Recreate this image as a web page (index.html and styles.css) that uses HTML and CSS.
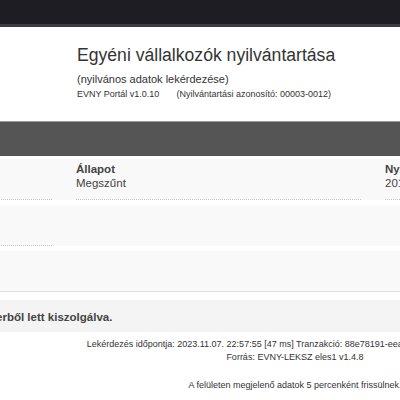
FILE: index.html
```html
<!DOCTYPE html>
<html lang="hu">
<head>
<meta charset="utf-8">
<link rel="stylesheet" href="styles.css">
</head>
<body>
<div class="topbar"></div>
<div class="page">
  <header class="header">
    <h1 class="title">Egyéni vállalkozók nyilvántartása</h1>
    <div class="subtitle">(nyilvános adatok lekérdezése)</div>
    <div class="meta"><span class="version">EVNY Portál v1.0.10</span><span>(Nyilvántartási azonosító: 00003-0012)</span></div>
  </header>
  <div class="band"></div>
  <section class="data">
    <div class="row">
      <div class="cell"><div class="label">Név</div><div class="value">Kiss</div></div>
      <div class="cell"><div class="label">Állapot</div><div class="value">Megszűnt</div></div>
      <div class="cell"><div class="label">Nyilvántartásba vétel</div><div class="value">2012.05.14.</div></div>
    </div>
    <div class="row">
      <div class="cell"><div class="label">&nbsp;</div><div class="value">&nbsp;</div></div>
      <div class="cell plain"></div>
      <div class="cell plain"></div>
    </div>
    <div class="row last">
      <div class="cell wide"><div class="label">&nbsp;</div><div class="value">&nbsp;</div></div>
    </div>
  </section>
  <div class="notice"><span class="notice-text">A válasz a gyorsítótár szerverből lett kiszolgálva.</span></div>
  <footer class="footer">
    <div>Lekérdezés időpontja: 2023.11.07. 22:57:55 [47 ms] Tranzakció: 88e78191-eeaa-4c1d-9b2e-5f3a7d6c0e</div>
    <div>Forrás: EVNY-LEKSZ eles1 v1.4.8</div>
    <div class="refresh">A felületen megjelenő adatok 5 percenként frissülnek.</div>
  </footer>
</div>
</body>
</html>
```
FILE: styles.css
```css
html, body {
  margin: 0;
  padding: 0;
  background: #fff;
  overflow: hidden;
}
body {
  font-family: "Liberation Sans", Arial, sans-serif;
  color: #333;
  width: 400px;
  height: 400px;
}
.topbar {
  height: 24px;
  background: #1d1d23;
  border-bottom: 3px solid #3b3b40;
}
.page {
  width: 810px;
  margin-left: -110px;
}
.header {
  height: 95px;
  padding-left: 187px;
  padding-top: 17px;
  box-sizing: border-box;
  border-bottom: 1px solid #9a9a9a;
}
.title {
  margin: 0;
  font-size: 17.6px;
  font-weight: normal;
  line-height: 22px;
  color: #333;
}
.subtitle {
  font-size: 11px;
  line-height: 14px;
  margin-top: 6px;
  color: #333;
}
.meta {
  font-size: 9px;
  line-height: 12px;
  margin-top: 2px;
  display: flex;
  gap: 17px;
  color: #333;
}
.band {
  height: 34px;
  background: #555;
  border-bottom: 2px solid #fff;
}
.data {
  display: flex;
  flex-direction: column;
  gap: 5px;
  padding-top: 1px;
  border-bottom: 1px solid #ddd;
}
.row {
  display: grid;
  grid-template-columns: 162px 285px 285px;
  column-gap: 24px;
  background: #f9f9f9;
}
.cell {
  padding: 3px 0 9px;
  border-bottom: 1px dotted #c8c8c8;
  font-size: 11.5px;
  line-height: 14px;
}
.cell.plain {
  border-bottom: none;
}
.cell.wide {
  grid-column: 1 / -1;
  border-bottom: none;
}
.label {
  font-weight: bold;
  color: #444;
}
.value {
  color: #444;
}
.notice {
  margin-top: 8px;
  height: 32px;
  background: #f4f4f4;
  display: flex;
  align-items: center;
}
.notice-text {
  font-size: 11.5px;
  font-weight: bold;
  color: #444;
  margin-left: -45px;
  padding-top: 2px;
}
.footer {
  padding-top: 6px;
  text-align: center;
  font-size: 9px;
  line-height: 13px;
  color: #333;
}
.refresh {
  margin-top: 15px;
}
```
